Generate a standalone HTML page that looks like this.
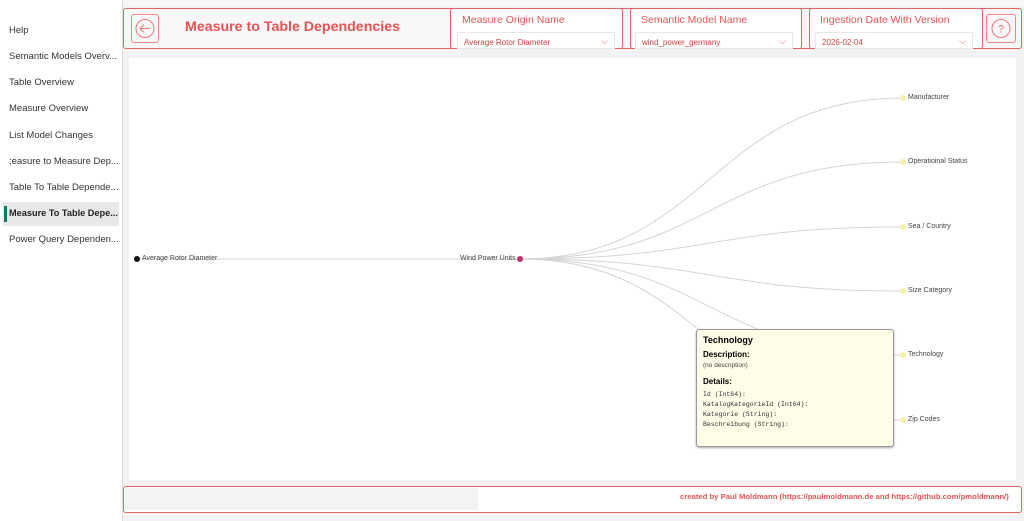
<!DOCTYPE html><html><head><style>
body{margin:0;width:1024px;height:521px;background:#f2f2f2;font-family:"Liberation Sans",sans-serif;position:relative;overflow:hidden}
.side{position:absolute;left:0;top:0;width:122px;height:521px;background:#fff;border-right:1px solid #ddd}
.side .t{position:absolute;left:9px;font-size:9.5px;color:#333;white-space:nowrap}
.sel{position:absolute;left:3px;top:202px;width:116px;height:24px;background:#e8e8e8}
.bar{position:absolute;left:4px;top:206px;width:3px;height:16px;background:#117865}
.box{position:absolute;border:1.5px solid #e06666;border-radius:3px;background:#f7f7f7}
.red{color:#e05555}
.sl{position:absolute;border:1px solid #e8e8e8;background:#fff;font-size:8px;color:#c44;padding:5px 0 0 6px;box-sizing:border-box}
.lbl{position:absolute;font-size:10.5px;color:#e05555}
.chev{position:absolute;right:6px;top:3px;font-size:9px;color:#e05555}
.nl{position:absolute;font-size:7px;color:#444}
</style></head><body>
<div class="side">
<div class="t" style="top:25px">Help</div>
<div class="t" style="top:51px">Semantic Models Overv...</div>
<div class="t" style="top:77px">Table Overview</div>
<div class="t" style="top:103px">Measure Overview</div>
<div class="t" style="top:130px">List Model Changes</div>
<div class="t" style="top:156px">;easure to Measure Dep...</div>
<div class="t" style="top:182px">Table To Table Depende...</div>
<div class="sel"></div><div class="bar"></div>
<div class="t" style="top:208px;font-weight:bold;color:#222;font-size:9.2px">Measure To Table Depe...</div>
<div class="t" style="top:234px">Power Query Dependen...</div>
</div>
<div style="position:absolute;left:123px;top:0;width:901px;height:6px;background:#f7f7f7"></div>
<div class="box" style="left:123px;top:8px;width:897px;height:39px"></div>
<div style="position:absolute;left:131px;top:14px;width:26px;height:27px;border:1px solid #e88;border-radius:3px"><svg width="26" height="27"><circle cx="13" cy="13.5" r="9" fill="none" stroke="#e77" stroke-width="1"/><path d="M18 13.5H8M12 9.5l-4 4 4 4" fill="none" stroke="#e77" stroke-width="1"/></svg></div>
<div style="position:absolute;left:185px;top:19px;font-size:14.2px;font-weight:bold" class="red">Measure to Table Dependencies</div>
<div class="box" style="left:450px;top:8px;width:171px;height:39px;background:#fff"></div>
<div class="lbl" style="left:462px;top:14px">Measure Origin Name</div>
<div class="sl" style="left:457px;top:32px;width:158px;height:17px">Average Rotor Diameter<span class="chev">⌵</span></div>
<div class="box" style="left:630px;top:8px;width:170px;height:39px;background:#fff"></div>
<div class="lbl" style="left:641px;top:14px">Semantic Model Name</div>
<div class="sl" style="left:635px;top:32px;width:158px;height:17px">wind_power_germany<span class="chev">⌵</span></div>
<div class="box" style="left:809px;top:8px;width:172px;height:39px;background:#fff"></div>
<div class="lbl" style="left:820px;top:14px">Ingestion Date With Version</div>
<div class="sl" style="left:815px;top:32px;width:158px;height:17px">2026-02-04<span class="chev">⌵</span></div>
<div style="position:absolute;left:986px;top:14px;width:28px;height:27px;border:1px solid #e88;border-radius:3px"><svg width="28" height="27"><circle cx="14" cy="13.5" r="9" fill="none" stroke="#e77"/><text x="14" y="17.5" font-size="11" text-anchor="middle" fill="#e77" font-family="Liberation Sans">?</text></svg></div>
<div style="position:absolute;left:129px;top:58px;width:887px;height:422px;background:#fff"></div>
<svg style="position:absolute;left:0;top:0" width="1024" height="521">
<g fill="none" stroke="#d4d4d4" stroke-width="1">
<path d="M137 259H520"/>
<path d="M520 259C710 259 710 98 903 98"/>
<path d="M520 259C710 259 710 162 903 162"/>
<path d="M520 259C710 259 710 227 903 227"/>
<path d="M520 259C710 259 710 291 903 291"/>
<path d="M520 259C710 259 710 355 903 355"/>
<path d="M520 259C710 259 710 420 903 420"/>
</g>
<circle cx="137" cy="259" r="3" fill="#111"/>
<circle cx="520" cy="259" r="3" fill="#c0306a"/>
<g fill="#f6f0a8"><circle cx="903" cy="98" r="3"/><circle cx="903" cy="162" r="3"/><circle cx="903" cy="227" r="3"/><circle cx="903" cy="291" r="3"/><circle cx="903" cy="355" r="3"/><circle cx="903" cy="420" r="3"/></g>
</svg>
<div class="nl" style="left:142px;top:255px">Average Rotor Diameter</div>
<div class="nl" style="left:460px;top:255px">Wind Power Units</div>
<div class="nl" style="left:908px;top:94px">Manufacturer</div>
<div class="nl" style="left:908px;top:158px">Operatioinal Status</div>
<div class="nl" style="left:908px;top:223px">Sea / Country</div>
<div class="nl" style="left:908px;top:287px">Size Category</div>
<div class="nl" style="left:908px;top:351px">Technology</div>
<div class="nl" style="left:908px;top:416px">Zip Codes</div>
<div style="position:absolute;left:696px;top:329px;width:196px;height:116px;background:#fdfde8;border:1px solid #999;border-radius:3px;box-shadow:0 1px 2px #aaa">
<div style="position:absolute;left:6px;top:5px;font-size:9px;font-weight:bold">Technology</div>
<div style="position:absolute;left:6px;top:20px;font-size:8px;font-weight:bold">Description:</div>
<div style="position:absolute;left:6px;top:32px;font-size:6.5px;color:#444">(no description)</div>
<div style="position:absolute;left:6px;top:47px;font-size:8px;font-weight:bold">Details:</div>
<div style="position:absolute;left:6px;top:60px;font-size:6.5px;line-height:10px;font-family:'Liberation Mono',monospace;color:#333">Id (Int64):<br>KatalogKategorieId (Int64):<br>Kategorie (String):<br>Beschreibung (String):</div>
</div>
<div class="box" style="left:123px;top:486px;width:897px;height:25px;background:#fff;overflow:hidden"></div>
<div style="position:absolute;left:125px;top:488px;width:353px;height:22px;background:#f3f3f3"></div>
<div style="position:absolute;left:680px;top:492px;width:338px;overflow:hidden;font-size:7.7px;font-weight:bold;white-space:nowrap" class="red">created by Paul Moldmann (https://paulmoldmann.de and https://github.com/pmoldmann/)</div>
</body></html>
